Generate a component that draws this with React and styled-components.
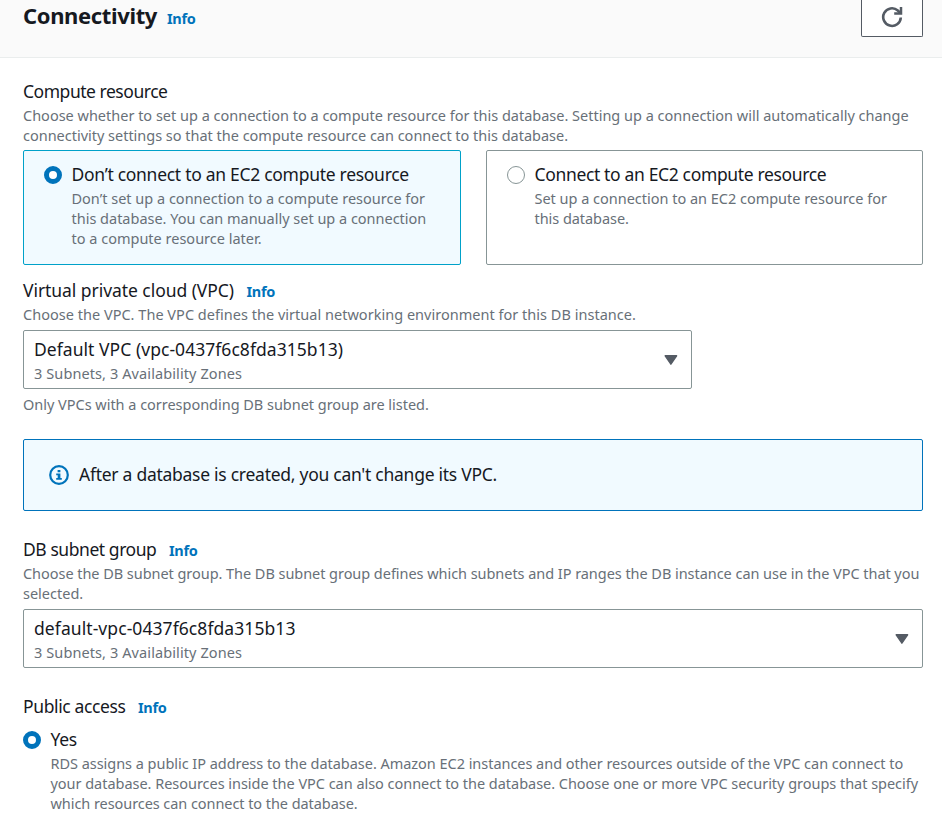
import React from "react";
import styled, { createGlobalStyle } from "styled-components";

const Global = createGlobalStyle`
  * { box-sizing: border-box; }
  body {
    margin: 0;
    background: #ffffff;
    color: #16191f;
    font-family: "Noto Sans", "Open Sans", sans-serif;
    overflow: hidden;
  }
`;

const Page = styled.main`
  width: 942px;
  height: 819px;
  overflow: hidden;
`;

const Header = styled.header`
  display: flex;
  justify-content: space-between;
  align-items: flex-start;
  height: 58px;
  padding: 0 19px 0 23px;
  background: #fafafa;
  border-bottom: 1px solid #eaeded;
`;

const HeaderText = styled.div`
  display: flex;
  align-items: baseline;
  gap: 10px;
`;

const Title = styled.h2`
  margin: 0;
  font-size: 22px;
  line-height: 30px;
  font-weight: 700;
  letter-spacing: -0.36px;
`;

const InfoLink = styled.a`
  color: #0073bb;
  font-size: 14.5px;
  line-height: 20px;
  font-weight: 700;
  letter-spacing: -0.3px;
  text-decoration: none;
`;

const RefreshButton = styled.button`
  display: flex;
  justify-content: center;
  width: 62px;
  height: 37px;
  padding: 6px 0 0;
  background: #ffffff;
  border: 1px solid #545b64;
  border-top: 0;
  border-radius: 0 0 2px 2px;
`;

const Body = styled.div`
  padding: 21px 19px 0 23px;
`;

const Field = styled.section`
  margin-bottom: ${(p) => p.$after || 0}px;
`;

const LabelRow = styled.div`
  display: flex;
  align-items: baseline;
  gap: 12.5px;
  height: 24px;
  margin-bottom: 2px;
`;

const Label = styled.span`
  display: block;
  font-size: 17.5px;
  line-height: 24px;
  white-space: nowrap;
  letter-spacing: ${(p) => p.$track || 0}px;
`;

const Description = styled.div`
  margin-bottom: ${(p) => p.$after || 0}px;
`;

const Line = styled.span`
  display: block;
  color: #687078;
  font-size: 14.5px;
  line-height: 20px;
  white-space: nowrap;
  letter-spacing: ${(p) => p.$track || 0}px;
`;

const Tiles = styled.div`
  display: grid;
  grid-template-columns: 438px 437px;
  gap: 25px;
`;

const Tile = styled.label`
  display: flex;
  gap: 9.5px;
  height: 115px;
  padding: 11px 20px;
  border: 1px solid ${(p) => (p.$selected ? "#00a1c9" : "#879596")};
  border-radius: 2px;
  background: ${(p) => (p.$selected ? "#f1faff" : "#ffffff")};
`;

const Option = styled.label`
  display: flex;
  gap: 9.5px;
`;

const RadioDot = styled.span`
  flex: none;
  width: 18px;
  height: 18px;
  margin-top: 4px;
  border-radius: 50%;
  background: #ffffff;
  border: ${(p) => (p.$checked ? "5.5px solid #0073bb" : "1px solid #879596")};
`;

const TileText = styled.div`
  display: flex;
  flex-direction: column;
  gap: 2px;
`;

const Select = styled.div`
  display: flex;
  align-items: center;
  justify-content: space-between;
  width: ${(p) => p.$width};
  height: 59px;
  padding: 1px 13px 0 10px;
  border: 1px solid #879596;
  border-radius: 2px;
  background: #ffffff;
`;

const Caret = styled.svg`
  display: block;
  margin-top: -1px;
`;

const Note = styled.div`
  margin: 5px 0 25px;
`;

const Alert = styled.div`
  display: flex;
  align-items: center;
  gap: 10px;
  height: 72px;
  padding: 0 25px;
  margin-bottom: 26px;
  border: 1px solid #0073bb;
  border-radius: 2px;
  background: #f1faff;
`;

const AlertText = styled(Label)`
  padding-bottom: 2px;
`;

function RefreshIcon() {
  return (
    <svg width="22" height="22" viewBox="0 0 22 22" fill="none" stroke="#545b64">
      <path d="M19.800 11.500a8.800 8.800 0 1 1-3-7l2.700 2.600" strokeWidth="2.600" />
      <path d="M20 1v6.600h-6.800" strokeWidth="2.500" />
    </svg>
  );
}

function InfoIcon() {
  return (
    <svg width="20" height="20" viewBox="0 0 20 20">
      <circle cx="10" cy="10" r="8.8" fill="none" stroke="#0073bb" strokeWidth="2.200" />
      <path d="M8.600 5h2.800v2.300H8.600zM7.200 8.500h4.200v4.500h1.400v1.800H7.200V13h1.500v-2.700H7.200z" fill="#0073bb" />
    </svg>
  );
}

function Dropdown({ width, value, track }) {
  return (
    <Select $width={width}>
      <TileText>
        <Label $track={track}>{value}</Label>
        <Line $track={0.1}>3 Subnets, 3 Availability Zones</Line>
      </TileText>
      <Caret width="14" height="10" viewBox="0 0 14 10">
        <path d="M1.200.800h11.400L6.900 9.200z" fill="#545b64" stroke="#545b64" strokeWidth="1.400" strokeLinejoin="round" />
      </Caret>
    </Select>
  );
}

export default function App() {
  return (
    <Page>
      <Global />
      <Header>
        <HeaderText>
          <Title>Connectivity</Title>
          <InfoLink>Info</InfoLink>
        </HeaderText>
        <RefreshButton aria-label="Refresh">
          <RefreshIcon />
        </RefreshButton>
      </Header>
      <Body>
        <Field $after={13}>
          <LabelRow>
            <Label $track={-0.47}>Compute resource</Label>
          </LabelRow>
          <Description $after={5}>
            <Line $track={-0.006}>
              Choose whether to set up a connection to a compute resource for this database. Setting up a connection
              will automatically change
            </Line>
            <Line $track={-0.015}>
              connectivity settings so that the compute resource can connect to this database.
            </Line>
          </Description>
          <Tiles>
            <Tile $selected>
              <RadioDot $checked />
              <TileText>
                <Label $track={-0.29}>Don’t connect to an EC2 compute resource</Label>
                <div>
                  <Line>Don’t set up a connection to a compute resource for</Line>
                  <Line $track={-0.01}>this database. You can manually set up a connection</Line>
                  <Line>to a compute resource later.</Line>
                </div>
              </TileText>
            </Tile>
            <Tile>
              <RadioDot />
              <TileText>
                <Label $track={-0.35}>Connect to an EC2 compute resource</Label>
                <div>
                  <Line $track={-0.015}>Set up a connection to an EC2 compute resource for</Line>
                  <Line $track={-0.05}>this database.</Line>
                </div>
              </TileText>
            </Tile>
          </Tiles>
        </Field>

        <Field>
          <LabelRow>
            <Label $track={-0.055}>Virtual private cloud (VPC)</Label>
            <InfoLink>Info</InfoLink>
          </LabelRow>
          <Description $after={6}>
            <Line $track={0.02}>
              Choose the VPC. The VPC defines the virtual networking environment for this DB instance.
            </Line>
          </Description>
          <Dropdown width="669px" value="Default VPC (vpc-0437f6c8fda315b13)" track={0.045} />
          <Note>
            <Line $track={-0.025}>Only VPCs with a corresponding DB subnet group are listed.</Line>
          </Note>
        </Field>

        <Alert>
          <InfoIcon />
          <AlertText $track={-0.267}>After a database is created, you can't change its VPC.</AlertText>
        </Alert>

        <Field $after={26}>
          <LabelRow>
            <Label $track={-0.44}>DB subnet group</Label>
            <InfoLink>Info</InfoLink>
          </LabelRow>
          <Description $after={6}>
            <Line $track={-0.047}>
              Choose the DB subnet group. The DB subnet group defines which subnets and IP ranges the DB instance can
              use in the VPC that you
            </Line>
            <Line>selected.</Line>
          </Description>
          <Dropdown width="100%" value="default-vpc-0437f6c8fda315b13" track={0.075} />
        </Field>

        <Field $after={9}>
          <LabelRow>
            <Label $track={-0.38}>Public access</Label>
            <InfoLink>Info</InfoLink>
          </LabelRow>
        </Field>
        <Option>
          <RadioDot $checked />
          <TileText>
            <Label $track={-0.3}>Yes</Label>
            <div>
              <Line $track={-0.036}>
                RDS assigns a public IP address to the database. Amazon EC2 instances and other resources outside of
                the VPC can connect to
              </Line>
              <Line $track={-0.03}>
                your database. Resources inside the VPC can also connect to the database. Choose one or more VPC
                security groups that specify
              </Line>
              <Line $track={-0.065}>which resources can connect to the database.</Line>
            </div>
          </TileText>
        </Option>
      </Body>
    </Page>
  );
}
